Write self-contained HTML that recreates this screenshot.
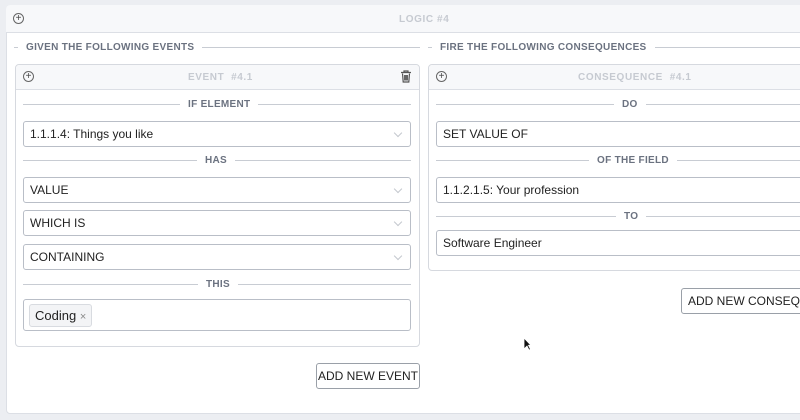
<!DOCTYPE html><html><head><style>
*{box-sizing:border-box;margin:0;padding:0}
body{width:800px;height:420px;background:#eceef2;font-family:"Liberation Sans",sans-serif;position:relative;overflow:hidden}
.a{position:absolute}
.panel{left:6px;top:5px;width:820px;height:409px;background:#fff;border:1px solid #dcdfe5;border-radius:4px}
.hdr{left:6px;top:5px;width:820px;height:28px;background:#f7f8fa;border-bottom:1px solid #dcdfe5;border-radius:4px 4px 0 0}
.ttl{font-size:10px;font-weight:bold;color:#c6cad1;letter-spacing:.6px}
.sec{font-size:10px;font-weight:bold;color:#6b7280;letter-spacing:.3px;background:#fff;padding:0 8px}
.line{height:1px;background:#c8ccd3}
.card{background:#fff;border:1px solid #d6d9df;border-radius:4px}
.chd{background:#f7f8fa;border-bottom:1px solid #dcdfe5;height:25px;border-radius:4px 4px 0 0}
.inp{border:1px solid #b9bec7;border-radius:3px;background:#fff;font-size:12px;color:#222;padding:0 6px;display:flex;align-items:center;height:26px;white-space:nowrap}
.chev{position:absolute;right:9px;top:8px;width:6px;height:6px;border-right:1px solid #c4c8ce;border-bottom:1px solid #c4c8ce;transform:rotate(45deg)}
.btn{border:1px solid #9aa0a8;border-radius:3px;background:#fff;font-size:12px;color:#222;display:flex;align-items:center;justify-content:center;height:26px;white-space:nowrap;overflow:hidden}
.plus{width:11px;height:11px;border:1px solid #666;border-radius:50%;font-size:10px;line-height:9px;text-align:center;color:#444}
</style></head><body>
<div class="a panel"></div>
<div class="a hdr"></div>
<div class="a plus" style="left:13px;top:13px">+</div>
<div class="a ttl" style="left:399px;top:14px">LOGIC #4</div>

<div class="a line" style="left:14px;top:47px;width:406px"></div>
<div class="a sec" style="left:18px;top:42px">GIVEN THE FOLLOWING EVENTS</div>
<div class="a line" style="left:428px;top:47px;width:380px"></div>
<div class="a sec" style="left:432px;top:42px">FIRE THE FOLLOWING CONSEQUENCES</div>

<!-- event card -->
<div class="a card" style="left:15px;top:64px;width:405px;height:283px">
<div class="chd"></div></div>
<div class="a plus" style="left:23px;top:71px">+</div>
<div class="a ttl" style="left:188px;top:72px">EVENT &nbsp;#4.1</div>
<svg class="a" style="left:400px;top:70px" width="12" height="13" viewBox="0 0 12 13"><path d="M1 2.5h10M4 2.5V1h4v1.5M2.5 3.5l.7 8.5h5.6l.7-8.5M4.7 5v5.5M6 5v5.5M7.3 5v5.5" fill="none" stroke="#555" stroke-width="1.2"/></svg>

<div class="a line" style="left:23px;top:104px;width:388px"></div>
<div class="a sec" style="left:180px;top:99px">IF ELEMENT</div>
<div class="a inp" style="left:23px;top:121px;width:388px">1.1.1.4: Things you like<span class="chev"></span></div>
<div class="a line" style="left:23px;top:160px;width:388px"></div>
<div class="a sec" style="left:197px;top:155px">HAS</div>
<div class="a inp" style="left:23px;top:177px;width:388px">VALUE<span class="chev"></span></div>
<div class="a inp" style="left:23px;top:210px;width:388px">WHICH IS<span class="chev"></span></div>
<div class="a inp" style="left:23px;top:244px;width:388px">CONTAINING<span class="chev"></span></div>
<div class="a line" style="left:23px;top:284px;width:388px"></div>
<div class="a sec" style="left:198px;top:279px">THIS</div>
<div class="a inp" style="left:23px;top:299px;width:388px;height:32px;padding:0 5px"><span style="background:#f3f4f6;border:1px solid #d8dbe0;border-radius:3px;padding:3px 5px;font-size:13px">Coding <span style="color:#888;font-size:11px">×</span></span></div>
<div class="a btn" style="left:316px;top:363px;width:104px">ADD NEW EVENT</div>

<!-- consequence -->
<div class="a card" style="left:428px;top:64px;width:400px;height:207px"><div class="chd"></div></div>
<div class="a plus" style="left:436px;top:71px">+</div>
<div class="a ttl" style="left:578px;top:72px">CONSEQUENCE &nbsp;#4.1</div>
<div class="a line" style="left:436px;top:104px;width:370px"></div>
<div class="a sec" style="left:614px;top:99px">DO</div>
<div class="a inp" style="left:436px;top:121px;width:380px">SET VALUE OF</div>
<div class="a line" style="left:436px;top:160px;width:370px"></div>
<div class="a sec" style="left:589px;top:155px">OF THE FIELD</div>
<div class="a inp" style="left:436px;top:177px;width:380px">1.1.2.1.5: Your profession</div>
<div class="a line" style="left:436px;top:216px;width:370px"></div>
<div class="a sec" style="left:616px;top:211px">TO</div>
<div class="a inp" style="left:436px;top:230px;width:380px">Software Engineer</div>
<div class="a btn" style="left:681px;top:288px;width:140px;justify-content:flex-start;padding-left:6px">ADD NEW CONSEQUENCE</div>
<svg class="a" style="left:523px;top:337px" width="9" height="14" viewBox="0 0 9 14"><path d="M1 1v11l3-3 2 4 1.5-.7-2-4H8z" fill="#111" stroke="#fff" stroke-width=".8"/></svg>
</body></html>
